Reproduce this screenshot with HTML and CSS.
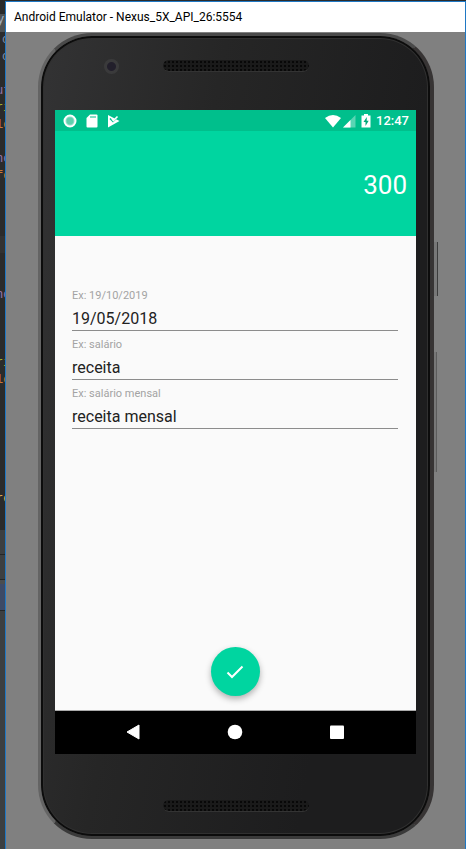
FILE: index.html
```html
<!DOCTYPE html>
<html lang="pt-BR">
<head>
<meta charset="utf-8">
<meta name="viewport" content="width=device-width, initial-scale=1">
<title>Android Emulator - Nexus_5X_API_26:5554</title>
<link rel="stylesheet" href="styles.css">
</head>
<body>
<div class="desktop">
  <div class="editor" aria-hidden="true">
    <div class="editor-tabs">y</div>
    <div class="editor-code">
      <span class="muted">c</span>
      <span class="muted">c</span>
      <span></span>
      <span class="purple">ut</span>
      <span class="green">ri</span>
      <span class="orange">lo</span>
      <span></span>
      <span class="purple">no</span>
      <span class="orange">fo</span>
      <span></span><span></span><span></span>
      <span class="current"></span>
      <span></span><span></span>
      <span class="purple">no</span>
      <span></span><span></span><span></span>
      <span class="green">ri</span>
      <span class="orange">lo</span>
      <span></span><span></span><span></span><span></span><span></span><span></span>
      <span class="gold">re</span>
      <span></span>
    </div>
    <div class="editor-bar"></div>
    <div class="editor-bar"></div>
    <div class="editor-selected"></div>
    <div class="editor-rest"></div>
  </div>
  <main class="window">
    <header class="titlebar">Android Emulator - Nexus_5X_API_26:5554</header>
    <div class="stage">
      <div class="phone">
        <div class="side-key power"></div>
        <div class="side-key volume"></div>
        <div class="bezel-top">
          <div class="camera"></div>
          <div class="speaker"></div>
        </div>
        <div class="screen">
          <div class="status">
            <div class="status-group">
              <svg width="14" height="14" viewBox="0 0 14 14"><circle cx="7" cy="7" r="5.5" fill="#8fdfc7" stroke="#fff" stroke-width="2"/><circle cx="7" cy="7" r="3.4" fill="#5fd0ae"/></svg>
              <svg width="12" height="14" viewBox="0 0 12 14"><path fill="#fff" d="M4 .5h6.500q1 0 1 1v11q0 1-1 1h-9q-1 0-1-1V4z"/><path stroke="#00bf8c" d="M5 2v2M7 2v2M9 2v2"/></svg>
              <svg width="13" height="14" viewBox="0 0 13 14"><path fill="#fff" d="M1 1 12.500 7 1 13.500z"/><path fill="none" stroke="#00bf8c" stroke-width="1.500" d="m3 4.500 3 3L11.500 2"/><path fill="none" stroke="#fff" stroke-width="1.600" d="m5 5 1.500 1.500L10.500 2.500"/></svg>
            </div>
            <div class="status-group end">
              <svg width="16" height="14" viewBox="0 0 16 14"><path fill="#fff" d="M0 4Q8-2 16 4L8 13.500z"/></svg>
              <svg width="14" height="14" viewBox="0 0 14 14"><path fill="#fff" opacity=".35" d="M13.500 1v12.500H1z"/><path fill="#fff" d="M8.500 6v7.500H1z"/></svg>
              <svg class="battery" width="10" height="14" viewBox="0 0 10 14"><path fill="#fff" d="M3 0h4v1.500h2.500v12h-9v-12H3z"/><path fill="#00a87a" d="M5.800 3 2.500 8h2v4l3.200-5.200h-2z"/></svg>
              <time class="clock">12:47</time>
            </div>
          </div>
          <div class="amount"><output>300</output></div>
          <form class="form">
            <div class="field"><label for="date">Ex: 19/10/2019</label><input id="date" type="text" value="19/05/2018"></div>
            <div class="field"><label for="name">Ex: salário</label><input id="name" type="text" value="receita"></div>
            <div class="field"><label for="desc">Ex: salário mensal</label><input id="desc" type="text" value="receita mensal"></div>
            <button class="fab" type="button" aria-label="Salvar">
              <svg width="24" height="24" viewBox="0 0 24 24"><path fill="none" stroke="#fff" stroke-width="2" d="m4.500 12.500 4.500 4.500L19.500 6.500"/></svg>
            </button>
          </form>
          <nav class="navbar">
            <button type="button" aria-label="Voltar"><svg width="16" height="16" viewBox="0 0 16 16"><path fill="#fff" stroke="#fff" stroke-linejoin="round" d="M2 8 14 1v14z"/></svg></button>
            <button type="button" aria-label="Início"><svg width="16" height="16" viewBox="0 0 16 16"><circle cx="8" cy="8" r="7.300" fill="#fff"/></svg></button>
            <button type="button" aria-label="Recentes"><svg width="16" height="16" viewBox="0 0 16 16"><rect x="1" y="1.500" width="14" height="13.500" rx="1" fill="#fff"/></svg></button>
          </nav>
        </div>
        <div class="bezel-bottom"><div class="speaker"></div></div>
      </div>
    </div>
  </main>
</div>
</body>
</html>
```
FILE: styles.css
```css
* { box-sizing: border-box; }
body { margin: 0; background: #2b2b2b; font-family: Roboto, sans-serif; }
svg { display: block; }
button { border: 0; padding: 0; background: none; }

.desktop { display: grid; grid-template-columns: 5px minmax(0, 1fr); min-height: 100vh; }

/* Editor behind the emulator */
.editor { display: flex; flex-direction: column; overflow: hidden; font: 12px/17px "Liberation Mono", monospace; }
.editor-tabs { height: 32px; padding-top: 12px; color: #a9b7c6; text-indent: -3px; background: linear-gradient(#2b2b2b 14px, #4e5254 14px); }
.editor-code { height: 498px; overflow: hidden; }
.editor-code span { display: block; height: 17px; overflow: hidden; text-indent: -4px; white-space: nowrap; }
.editor-code .muted { text-indent: 2px; color: #7d8fa9; }
.purple { color: #9876aa; }
.green { color: #a5b02a; }
.orange { color: #cc7832; }
.gold { color: #e0a84a; }
.current { background: #323232; }
.editor-bar { height: 25px; background: #3c3f41; border-bottom: 1px solid #242627; }
.editor-selected { height: 31px; background: #3d4a66; border-top: 4px solid #4a4d4f; border-bottom: 1px solid #242627; }
.editor-rest { flex: 1; background: #3c3f41; }

/* Emulator window */
.window { display: flex; flex-direction: column; margin-top: 1px; border: 1px solid #1f78c4; border-bottom: 0; background: #808080; }
.titlebar { height: 30px; padding-left: 8px; background: #fff; color: #000; font: 12px/30px Roboto, sans-serif; }
.stage { flex: 1; padding: 1px 31px 10px 32px; }

.phone {
  position: relative; display: flex; flex-direction: column;
  border: solid; border-color: #4a4a4a #373434 #3a3a3a #646464; border-width: 3px 4px 3px 3px; border-radius: 54px;
  background: linear-gradient(100deg, #333334, #262626 35%, #1d1d1e 75%);
  box-shadow: inset 0 0 0 2px #0c0c0c, inset 0 0 0 3px #303030;
}
.side-key { position: absolute; right: -7px; width: 3px; background: #777; border-right: 1px solid #3c3c3c; }
.power { top: 206px; height: 54px; }
.power { right: -8px; width: 4px; }
.volume { top: 316px; height: 120px; border-color: #5c5c5c; }
.bezel-top { display: grid; grid-template-columns: 1fr 146px 1fr; align-items: center; height: 74px; padding-bottom: 14px; }
.bezel-bottom { display: grid; grid-template-columns: 1fr 146px 1fr; height: 82px; padding-top: 46px; }
.speaker {
  grid-column: 2; height: 12px; border-radius: 6px; border-bottom: 1px solid #333;
  background: radial-gradient(#080808 1px, transparent 1px) 0 0 / 4px 4px, #1a1a1a;
}
.camera { justify-self: center; width: 15px; height: 15px; margin-left: 20px; border-radius: 50%; background: radial-gradient(#221f2b 4px, #3a3a3b 5px); }

/* Android screen */
.screen { margin: 0 14px; background: #fafafa; }
.status { display: flex; justify-content: space-between; align-items: center; height: 21px; padding: 0 7px 0 8px; background: #00bf8c; }
.status-group { display: flex; align-items: center; gap: 9px; }
.status-group.end { gap: 1px; }
.battery { margin: 0 4px; }
.clock { color: #fff; font-size: 13px; font-weight: 500; line-height: 21px; }
.amount { display: flex; align-items: center; justify-content: flex-end; height: 105px; padding: 2px 9px 0; background: #00d5a0; color: #fff; font-size: 26px; }
.form { display: flex; flex-direction: column; height: 475px; padding: 51px 18px 14px 17px; border-bottom: 1px solid #aaa; }
.field { display: flex; flex-direction: column; height: 49px; }
.field label { color: #a3a3a3; font-size: 11px; line-height: 18px; }
.field input { width: 100%; height: 26px; padding: 2px 0 0; border: 0; border-bottom: 1px solid #8c8c8c; border-radius: 0; background: none; color: #222; font: 16px/23px Roboto, sans-serif; outline: 0; }
.fab { display: grid; place-items: center; align-self: center; width: 49px; height: 49px; margin-top: auto; border-radius: 50%; background: #00d5a0; box-shadow: 0 3px 6px rgb(0 0 0 / .3); }
.navbar { display: flex; align-items: center; justify-content: center; gap: 86px; height: 43px; padding: 0 2px 2px 0; background: #000; }
```
